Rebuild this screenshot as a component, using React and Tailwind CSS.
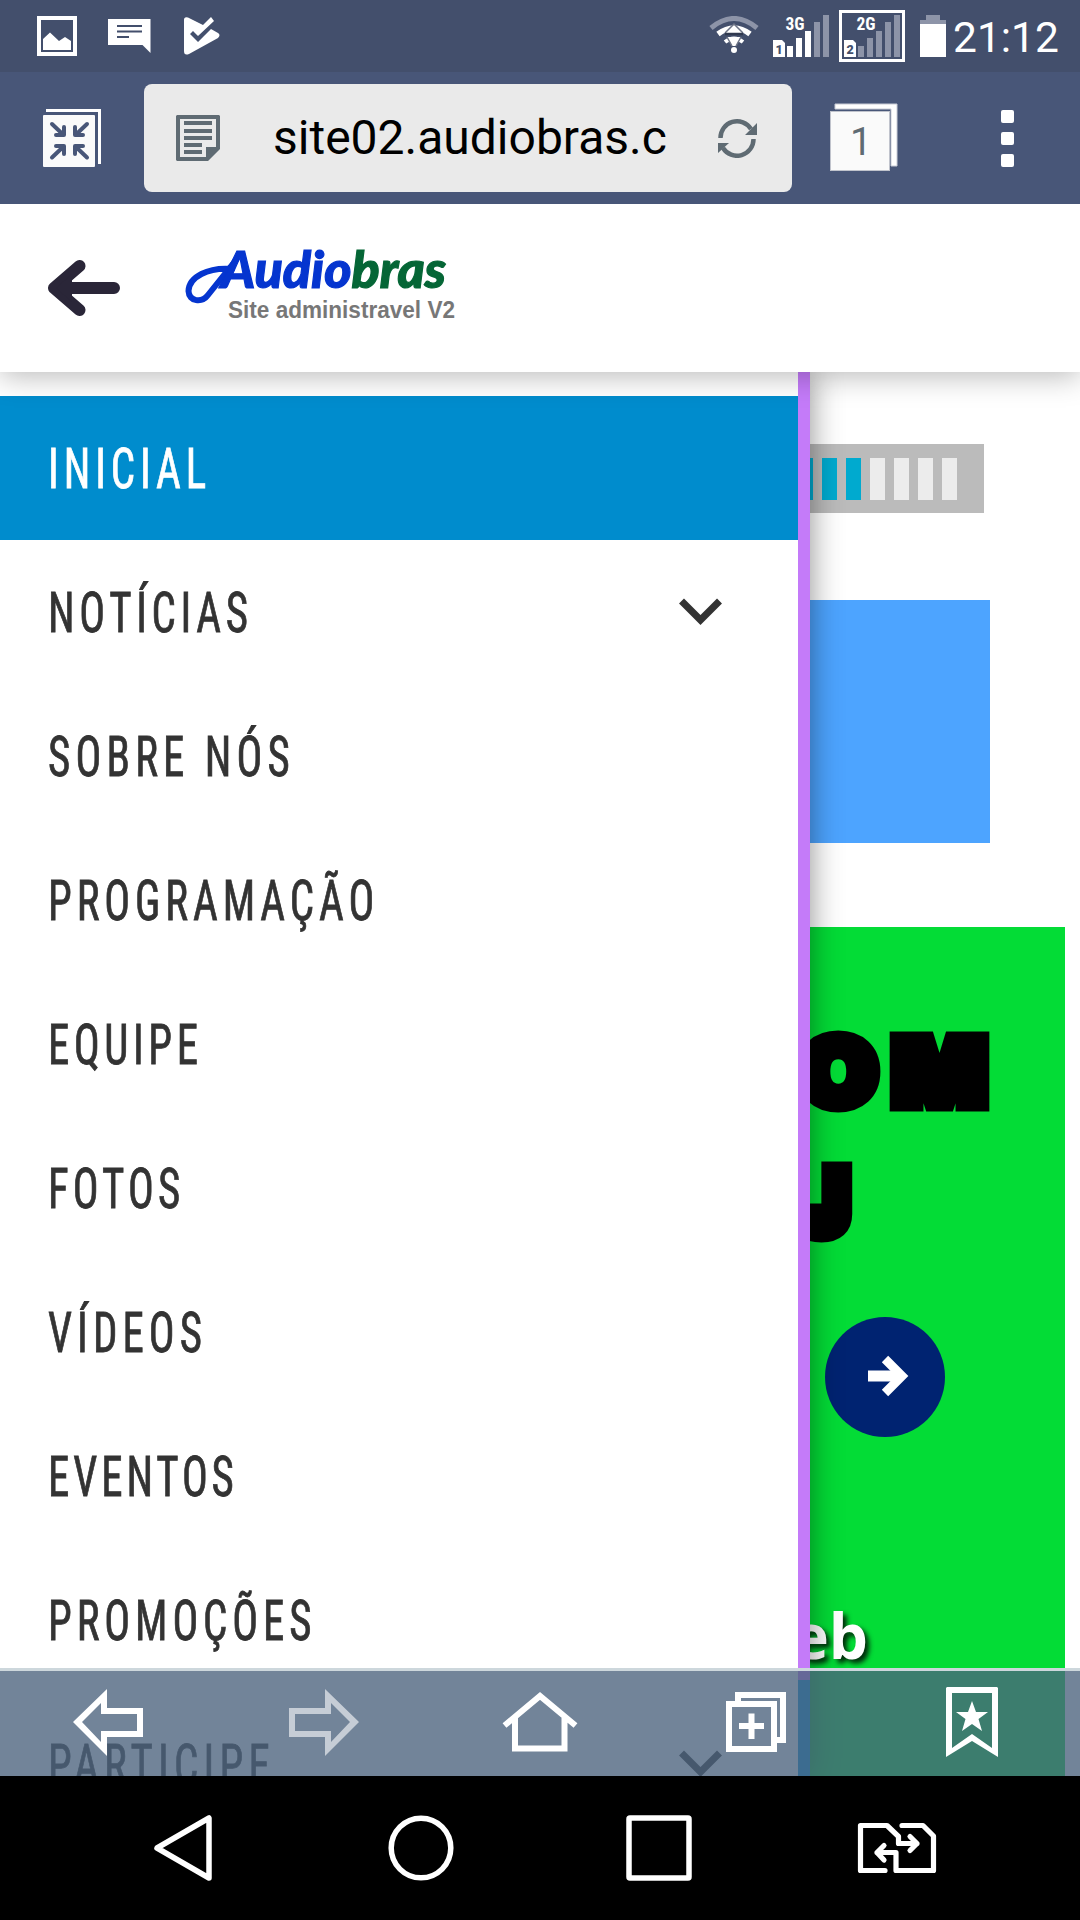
const menuItems = [
  { label: 'INICIAL', tracking: 'tracking-[6.3px]', active: true },
  { label: 'NOTÍCIAS', tracking: 'tracking-[6px]', submenu: true },
  { label: 'SOBRE NÓS', tracking: 'tracking-[6.7px]' },
  { label: 'PROGRAMAÇÃO', tracking: 'tracking-[6.3px]' },
  { label: 'EQUIPE', tracking: 'tracking-[5.9px]' },
  { label: 'FOTOS', tracking: 'tracking-[5.3px]' },
  { label: 'VÍDEOS', tracking: 'tracking-[6.5px]' },
  { label: 'EVENTOS', tracking: 'tracking-[5px]' },
  { label: 'PROMOÇÕES', tracking: 'tracking-[6.3px]' },
  { label: 'PARTICIPE', tracking: 'tracking-[6.7px]', submenu: true },
];

const levels = [true, true, true, true, true, true, true, false, false, false, false];

function SignalIcon({ sim, network, strength }) {
  const heights = [11, 19, 26, 35, 42];
  return (
    <svg width="56" height="42" viewBox="0 0 56 42">
      <path d="M0 25H9L12 28V42H0Z" fill="#fff" />
      <text x="6" y="38.5" fontFamily="Roboto, sans-serif" fontWeight="900" fontSize="12.5" textAnchor="middle" fill="#434f6c">{sim}</text>
      {heights.map((h, i) => (
        <rect key={h} x={14 + i * 9} y={42 - h} width="6" height={h} fill={i < strength ? '#fff' : '#8d94a8'} />
      ))}
      <text x="22" y="15" fontFamily="Roboto Condensed, Roboto, sans-serif" fontWeight="700" fontSize="17.5" textAnchor="middle" fill="#fff">{network}</text>
    </svg>
  );
}

function StatusBar() {
  return (
    <div className="flex h-[72px] items-start justify-between bg-[#434f6c]">
      <div className="flex items-start pt-4 pl-[37px]">
        {/* Screenshot notification */}
        <svg width="40" height="40" viewBox="0 0 40 40">
          <rect x="2" y="2" width="36" height="36" fill="none" stroke="#fff" strokeWidth="4" />
          <path d="M6 34V23L13 16.500L22 25L28 21L34 25V34Z" fill="#fff" />
        </svg>
        {/* SMS notification */}
        <svg className="mt-[3px] ml-[31px]" width="43" height="34" viewBox="0 0 43 34">
          <path d="M0 0H42.500V34L34.500 26H0Z" fill="#fff" />
          <path d="M9 7H34M9 12.500H34M9 18H21" stroke="#434f6c" strokeWidth="2" />
        </svg>
        {/* Play Store notification */}
        <svg className="mt-px ml-[32px]" width="38" height="38" viewBox="0 0 38 38">
          <path d="M1 3Q1-.5 5 .6L20 8L28 0L31 4L15 19L10 14L7 17L15 25L28 12L35 16Q38 18 35 21L6 37Q1 39 1 34Z" fill="#fff" />
        </svg>
      </div>
      <div className="flex items-start pt-[10px] pr-[20px]">
        <svg className="mt-[6px]" width="50" height="38" viewBox="0 0 50 38">
          <path d="M2 12Q25-7 48 12" fill="none" stroke="#8d94a8" strokeWidth="5" />
          <path d="M9 18Q25 6 41 18" fill="none" stroke="#fff" strokeWidth="5.500" />
          <path d="M16 26Q25 19 34 26" fill="none" stroke="#fff" strokeWidth="4" />
          <path d="M25 9L34 17H16ZM18 21H32L27 30H23Z" fill="#fff" />
          <path d="M16 17L25 8L34 17" fill="none" stroke="#6d7486" strokeWidth="1.500" />
          <path d="M16 18H34" stroke="#30394f" strokeWidth="2.500" />
          <path d="M18 21L23 30M32 21L27 30" stroke="#6d7486" strokeWidth="1.500" />
          <circle cx="25" cy="34" r="3" fill="#fff" />
        </svg>
        <div className="mt-[5px] ml-[14px]">
          <SignalIcon sim="1" network="3G" strength={3} />
        </div>
        <div className="ml-[10px] h-[52px] w-[66px] border-[3px] border-white pt-[2px] pl-[2px]">
          <SignalIcon sim="2" network="2G" strength={0} />
        </div>
        <svg className="mt-[5px] ml-[15px]" width="26" height="42" viewBox="0 0 26 42">
          <path d="M0 9V5H6V0H20V5H26V9Z" fill="#8d94a8" />
          <rect y="9" width="26" height="33" fill="#fff" />
        </svg>
        <span className="ml-[7px] w-[107px] pt-[2px] text-[42.5px] leading-[52px] whitespace-nowrap text-white">21:12</span>
      </div>
    </div>
  );
}

function BrowserBar() {
  return (
    <div className="relative z-30 flex h-[132px] items-center bg-[#485678]">
      <svg className="ml-[42px]" width="60" height="60" viewBox="42 108 60 60">
        <path d="M46 109H101V164H98V112H46Z" fill="#fff" />
        <rect x="43" y="115" width="52" height="52" rx="1" fill="#fafafa" />
        <g fill="none" stroke="#485678" strokeWidth="4" strokeLinecap="round" strokeLinejoin="round">
          <path d="M52 124L63 134.500M64 127V135H56" />
          <path d="M87 124L76 134.500M75 127V135H83" />
          <path d="M52 157.500L63 147M64 154V146H56" />
          <path d="M87 157.500L76 147M75 154V146H83" />
        </g>
      </svg>

      <div className="ml-[42px] flex h-[108px] w-[648px] items-center rounded-lg bg-[#eaeaea]">
        <svg className="ml-8" width="44" height="46" viewBox="0 0 44 46">
          <path fillRule="evenodd" d="M1 0H43L44 1V34L32 46H1L0 45V1ZM4 4V42H30V32H40V4Z" fill="#5f6b73" />
          <path d="M8 8H36M8 16H36M8 23H36M8 30H26M8 37H26" stroke="#5f6b73" strokeWidth="4" />
        </svg>
        <span className="ml-[53px] w-[396px] overflow-hidden text-[48px] leading-[60px] whitespace-nowrap text-black">
          site02.audiobras.c
        </span>
        <svg className="ml-[48px]" width="40" height="40" viewBox="717 117 40 40">
          <path d="M720.500 137A16.500 16.500 0 0 1 751 128M753.500 138A16.500 16.500 0 0 1 723 147" fill="none" stroke="#5f6b73" strokeWidth="4.500" />
          <path d="M757 122V134H745ZM718 152V142H729Z" fill="#5f6b73" />
        </svg>
      </div>

      <svg className="ml-[37px]" width="70" height="70" viewBox="829 103 70 70">
        <path d="M835 104H897V166H891V109H835Z" fill="#fff" stroke="#c9ccd6" strokeWidth="1" />
        <rect x="830.500" y="111.500" width="59" height="59" fill="#fafafa" stroke="#c0c3cc" />
        <text x="861" y="155" fontFamily="Roboto, sans-serif" fontSize="39" textAnchor="middle" fill="#5f6b73">1</text>
      </svg>

      <div className="ml-[102px] flex flex-col gap-[9px]">
        <span className="size-[13px] rounded-[2px] bg-white" />
        <span className="size-[13px] rounded-[2px] bg-white" />
        <span className="size-[13px] rounded-[2px] bg-white" />
      </div>
    </div>
  );
}

function Logo() {
  return (
    <svg className="ml-[62px]" width="284" height="120" viewBox="182 228 284 120">
      <path d="M232 269C208 267 189 277 188.500 291C189 302 202 303 208 295L236 260" fill="none" stroke="#0535cf" strokeWidth="6" strokeLinecap="round" />
      <text x="221" y="288" textLength="225" lengthAdjust="spacingAndGlyphs" fontFamily="Lato, sans-serif" fontStyle="italic" fontWeight="900" fontSize="52" strokeWidth="1.200">
        <tspan fill="#0535cf" stroke="#0535cf">Audio</tspan>
        <tspan fill="#056636" stroke="#056636">bras</tspan>
      </text>
      <text x="228" y="318" textLength="227" lengthAdjust="spacingAndGlyphs" fontFamily="Liberation Sans, Arial, sans-serif" fontWeight="700" fontSize="23.500" fill="#777">
        Site administravel V2
      </text>
    </svg>
  );
}

function SiteHeader() {
  return (
    <header className="relative z-20 flex h-[168px] items-center bg-white shadow-[0_4px_28px_rgba(0,0,0,0.28)]">
      <svg className="ml-[48px]" width="72" height="56" viewBox="0 0 72 56">
        <path d="M7 28H66M31.500 6L6 28L31.500 50" fill="none" stroke="#2a2638" strokeWidth="12" strokeLinecap="round" strokeLinejoin="round" />
        <path d="M8 28L24 14V42Z" fill="#2a2638" />
      </svg>
      <Logo />
    </header>
  );
}

function MenuItem({ item }) {
  return (
    <li className={`flex h-36 items-center justify-between pr-[76px] pl-[48px] ${item.active ? 'bg-[#008ccd] text-white' : 'text-[#333]'}`}>
      <span className={`origin-left scale-x-[0.78] pt-[3px] font-['Roboto_Condensed'] text-[55px] leading-none whitespace-nowrap [-webkit-text-stroke:0.8px_currentColor] ${item.tracking}`}>
        {item.label}
      </span>
      {item.submenu && (
        <svg width="43" height="28" viewBox="0 0 43 28">
          <path d="M2.500 3L21.500 22L40.500 3" fill="none" stroke="#333" strokeWidth="7" />
        </svg>
      )}
    </li>
  );
}

function Drawer() {
  return (
    <nav className="absolute inset-y-0 left-0 z-10 flex w-[810px] bg-white shadow-[0_0_30px_rgba(0,0,0,0.45)]">
      <ul className="w-[798px] pt-6">
        {menuItems.map((item) => (
          <MenuItem key={item.label} item={item} />
        ))}
      </ul>
      <div className="flex w-3 flex-col">
        <div className="h-[1308px] bg-[#c47bf9]" />
        <div className="flex-1 bg-[#0090d2]" />
      </div>
    </nav>
  );
}

function PageContent() {
  return (
    <div className="flex flex-col items-end">
      <div className="mt-[72px] mr-[96px] flex h-[69px] items-center justify-end gap-[9px] bg-[#bbb] pr-[27px] pl-6">
        {levels.map((on, i) => (
          <span key={i} className={`h-[42px] w-[15px] ${on ? 'bg-[#00aacf]' : 'bg-[#ececec]'}`} />
        ))}
      </div>
      <div className="mt-[87px] mr-[90px] h-[243px] w-[900px] bg-[#4da4ff]" />
      <div className="mt-[84px] mr-[15px] flex h-[900px] w-[1050px] flex-col items-end bg-[#03dc36] font-['Inter'] text-[92px] leading-[108px] font-black text-black">
        <span className="mt-[91px] mr-[63px] origin-right scale-x-[1.08] tracking-[14px] [-webkit-text-stroke:13px_black]">COM</span>
        <span className="mt-[22px] mr-[215px] [-webkit-text-stroke:13px_black]">J</span>
        <span className="mt-[61px] mr-[120px] flex size-[120px] items-center justify-center rounded-full bg-[#002371]">
          <svg className="mt-[-3px] ml-[6px]" width="42" height="42" viewBox="0 0 42 42">
            <path d="M1 21H34" stroke="#fff" strokeWidth="11" />
            <path d="M18 4L35 21L18 38" fill="none" stroke="#fff" strokeWidth="9" />
          </svg>
        </span>
        <span className="mt-[163px] mr-[197px] font-['Open_Sans'] text-[62px] leading-[70px] font-bold text-white [text-shadow:4px_4px_5px_rgba(0,0,0,0.8)]">
          Web
        </span>
      </div>
    </div>
  );
}

function BrowserTools() {
  return (
    <div className="absolute inset-x-0 bottom-0 z-20 flex h-[108px] items-start border-t-[3px] border-[#cdd7dc] bg-[rgba(76,99,126,0.79)] bg-clip-padding">
      <svg className="mt-[18px] ml-[73px]" width="70" height="67" viewBox="73 1689 70 67">
        <path fillRule="evenodd" d="M73 1722L107 1689V1708H143V1737H107V1756ZM82 1722L101 1742V1731H137V1714H101V1703Z" fill="#fff" />
      </svg>
      <svg className="mt-[18px] ml-[146px] opacity-60" width="70" height="67" viewBox="73 1689 70 67">
        <path transform="translate(216 0) scale(-1 1)" fillRule="evenodd" d="M73 1722L107 1689V1708H143V1737H107V1756ZM82 1722L101 1742V1731H137V1714H101V1703Z" fill="#fff" />
      </svg>
      <svg className="mt-[20px] ml-[143px]" width="76" height="62" viewBox="502 1691 76 62">
        <path d="M504.500 1725.500L540 1696L575.500 1725.500M515 1718V1748.500H564.500V1718" fill="none" stroke="#fff" strokeWidth="6" />
      </svg>
      <svg className="mt-[20px] ml-[147px]" width="62" height="62" viewBox="725 1691 62 62">
        <path d="M738 1701V1695H783V1740H777M729 1704H774V1749H729ZM751.500 1713.500V1739M739 1726H764" fill="none" stroke="#fff" strokeWidth="6" />
      </svg>
      <svg className="mt-4 ml-[159px]" width="52" height="70" viewBox="946 1687 52 70">
        <path fillRule="evenodd" d="M947 1687H997L998 1688V1757L972 1741L946 1757V1688ZM952 1693V1748L972 1734L992 1748V1693Z" fill="#fff" />
        <path d="M972 1701L976 1712H988L978.500 1719L982 1731L972 1724L962 1731L965.500 1719L956 1712H968Z" fill="#fff" />
      </svg>
    </div>
  );
}

function NavigationBar() {
  return (
    <div className="flex h-36 items-center bg-black">
      <svg className="ml-[153px]" width="60" height="68" viewBox="153 1814 60 68">
        <path d="M157 1848L209 1818V1878Z" fill="none" stroke="#fff" strokeWidth="5.500" strokeLinejoin="round" />
      </svg>
      <svg className="ml-[174px]" width="68" height="68" viewBox="387 1814 68 68">
        <circle cx="421" cy="1848" r="29.800" fill="none" stroke="#fff" strokeWidth="5.500" />
      </svg>
      <svg className="ml-[170px]" width="68" height="68" viewBox="625 1814 68 68">
        <rect x="629" y="1818" width="60" height="60" rx="1" fill="none" stroke="#fff" strokeWidth="5.500" />
      </svg>
      <svg className="ml-[163px]" width="82" height="54" viewBox="856 1821 82 54">
        <g fill="none" stroke="#fff" strokeWidth="5.200" strokeLinecap="round" strokeLinejoin="round">
          <path d="M885 1870.500H860.500V1825.500H887L898.500 1836.500V1843.500H917M910 1836.500L917 1843.500L910 1850.500" />
          <path d="M902 1825.500H923L933.500 1836V1870.500H896V1852.500H877M884 1845.500L877 1852.500L884 1860" />
        </g>
      </svg>
    </div>
  );
}

function App() {
  return (
    <div className="flex h-[1920px] w-[1080px] flex-col overflow-hidden bg-white font-['Roboto',sans-serif]">
      <StatusBar />
      <BrowserBar />
      <SiteHeader />
      <main className="relative h-[1404px] overflow-hidden bg-white">
        <PageContent />
        <Drawer />
        <BrowserTools />
      </main>
      <NavigationBar />
    </div>
  );
}

export default App;
